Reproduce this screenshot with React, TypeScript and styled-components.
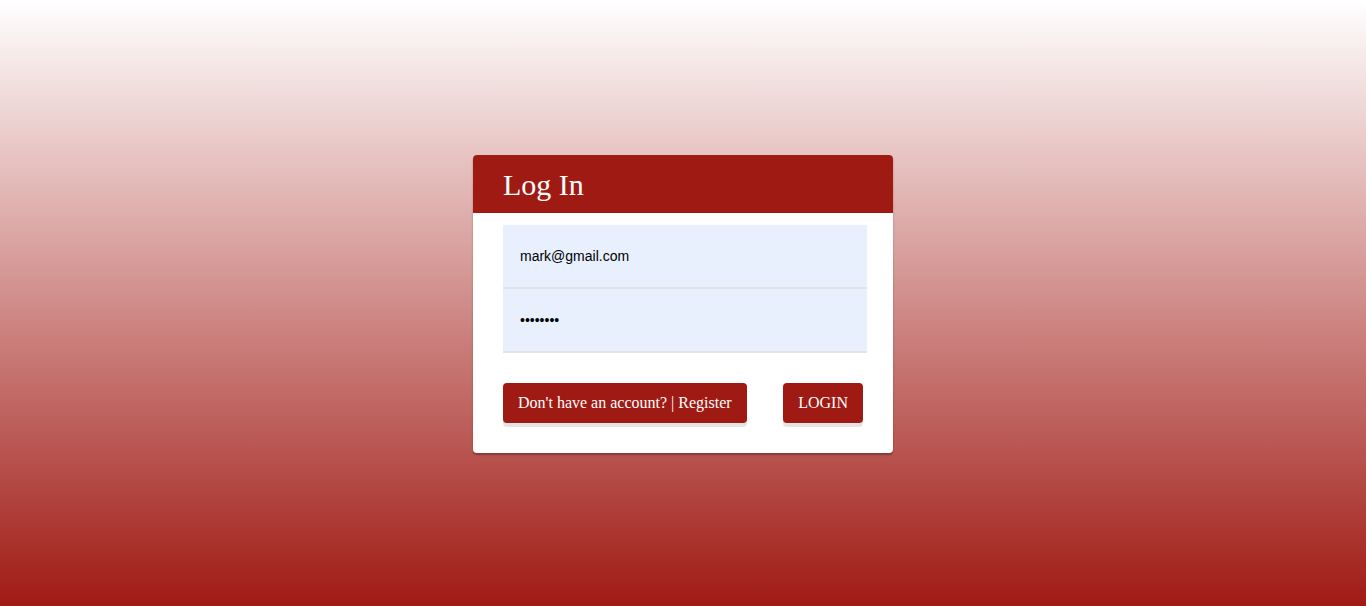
import React, { useState } from "react";
import styled, { createGlobalStyle } from "styled-components";

const red = "#a01a14";

const GlobalStyle = createGlobalStyle`
  html, body {
    margin: 0;
    padding: 0;
    height: 100%;
  }
  #root {
    height: 100%;
  }
`;

const Page = styled.main`
  height: 606px;
  display: flex;
  align-items: center;
  justify-content: center;
  background: linear-gradient(to bottom, #ffffff 0%, ${red} 100%);
  font-family: "Liberation Serif", "Times New Roman", serif;
`;

const Card = styled.section`
  width: 420px;
  background: #fff;
  border-radius: 4px;
  box-shadow: 0 2px 2px rgba(0, 0, 0, 0.3);
  overflow: hidden;
  margin-top: 1px;
`;

const Header = styled.header`
  height: 58px;
  background: ${red};
  display: flex;
  align-items: center;
  padding: 0 30px;
`;

const Title = styled.h1`
  margin: 0;
  color: #fff;
  font-weight: normal;
  font-size: 30px;
  padding-top: 2px;
`;

const Form = styled.form`
  padding: 12px 26px 30px 30px;
  display: flex;
  flex-direction: column;
`;

const Input = styled.input`
  height: 64px;
  box-sizing: border-box;
  border: none;
  border-bottom: 2px solid #e3e3e3;
  background: #e8f0fe;
  padding: 0 17px;
  font-family: "Liberation Sans", Arial, sans-serif;
  font-size: 14px;
  color: #000;
  outline: none;
`;

const Actions = styled.div`
  display: flex;
  justify-content: space-between;
  width: 360px;
  margin-top: 30px;
`;

const Button = styled.button`
  height: 40px;
  padding: 0 15px;
  border: none;
  border-radius: 4px;
  background: ${red};
  color: #fff;
  font-family: "Liberation Serif", "Times New Roman", serif;
  font-size: 16px;
  box-shadow: 0 4px 0 #e4e4e4;
  cursor: pointer;
`;

export default function App() {
  const [email, setEmail] = useState("mark@gmail.com");
  const [password, setPassword] = useState("password");

  return (
    <>
      <GlobalStyle />
      <Page>
        <Card>
          <Header>
            <Title>Log In</Title>
          </Header>
          <Form onSubmit={(e) => e.preventDefault()}>
            <Input
              type="email"
              value={email}
              onChange={(e) => setEmail(e.target.value)}
            />
            <Input
              type="password"
              value={password}
              onChange={(e) => setPassword(e.target.value)}
            />
            <Actions>
              <Button type="button">Don't have an account? | Register</Button>
              <Button type="submit">LOGIN</Button>
            </Actions>
          </Form>
        </Card>
      </Page>
    </>
  );
}
